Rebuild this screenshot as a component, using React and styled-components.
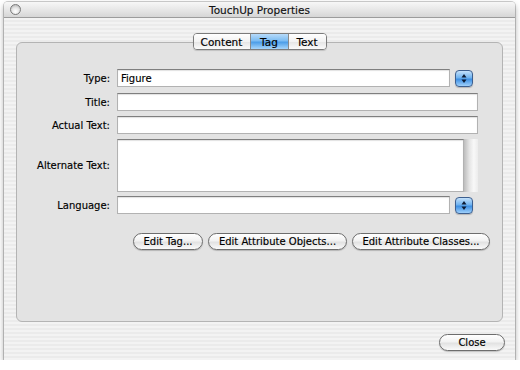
import React from "react";
import styled, { createGlobalStyle } from "styled-components";

const Global = createGlobalStyle`
  html, body { margin: 0; padding: 0; background: #ffffff; }
  body { font-family: "DejaVu Sans", "Liberation Sans", sans-serif; font-size: 10px; color: #000; }
`;

const Window = styled.div`
  margin: 2px 0 0 4px;
  width: 511px;
  height: 358px;
  display: flex;
  flex-direction: column;
  background: repeating-linear-gradient(#f3f3f3 0 2px, #ebebeb 2px 4px);
  box-shadow: 0 0 0 1px rgba(0,0,0,0.18), 0 3px 6px rgba(0,0,0,0.35);
  border-radius: 4px 4px 0 0;
`;

const TitleBar = styled.div`
  height: 15px;
  flex: none;
  display: flex;
  align-items: center;
  padding-left: 6px;
  background: linear-gradient(#f7f7f7, #e4e4e4 60%, #d6d6d6);
  border-bottom: 1px solid #9c9c9c;
  border-radius: 4px 4px 0 0;
`;

const CloseDot = styled.span`
  width: 9px;
  height: 9px;
  border-radius: 50%;
  border: 1px solid #7a7a7a;
  background: radial-gradient(circle at 50% 70%, #ffffff 0%, #e6e6e6 45%, #a9a9a9 100%);
  flex: none;
`;

const Title = styled.div`
  flex: 1;
  text-align: center;
  margin-right: 17px;
  font-size: 10.5px;
  color: #111;
  -webkit-text-stroke: 0.15px #111;
`;

const Content = styled.div`
  flex: 1;
  display: flex;
  flex-direction: column;
  padding: 15px 12px 0 12px;
`;

const Tabs = styled.div`
  align-self: center;
  display: flex;
  height: 15px;
  border: 1px solid #7b7b7b;
  border-radius: 4px;
  overflow: hidden;
  position: relative;
  z-index: 1;
  box-shadow: 0 1px 1px rgba(0,0,0,0.15);
`;

const Tab = styled.div`
  width: ${p => p.$w}px;
  display: flex;
  align-items: center;
  justify-content: center;
  font-size: 10.5px;
  color: #000;
  -webkit-text-stroke: 0.15px #000;
  border-left: ${p => (p.$first ? "none" : "1px solid #8a8a8a")};
  background: ${p =>
    p.$active
      ? "linear-gradient(#b7dbfa, #7cbcf2 45%, #4c9ee8 55%, #a7d6fb)"
      : "linear-gradient(#ffffff, #f3f3f3 50%, #e6e6e6 55%, #fbfbfb)"};
`;

const Box = styled.div`
  box-sizing: border-box;
  margin-top: -8px;
  height: 280px;
  border: 1px solid #b4b4b4;
  border-radius: 6px;
  background: #e3e3e3;
  padding-top: 26px;
  display: flex;
  flex-direction: column;
`;

const Row = styled.div`
  display: flex;
  align-items: center;
  margin-top: ${p => p.$mt || 0}px;
`;

const Label = styled.div`
  width: 93px;
  text-align: right;
  margin-right: 7px;
  font-size: 10px;
  color: #000;
  -webkit-text-stroke: 0.15px #000;
`;

const Field = styled.div`
  width: ${p => p.$w}px;
  height: ${p => p.$h || 18}px;
  box-sizing: border-box;
  background: #fff;
  border: 1px solid #b2b2b2;
  border-top-color: #7f7f7f;
  box-shadow: inset 0 1px 1px rgba(0,0,0,0.12);
  display: flex;
  align-items: center;
  padding-left: 3px;
  font-size: 10px;
  color: #000;
  -webkit-text-stroke: 0.15px #000;
`;

const AreaWrap = styled.div`
  display: flex;
  width: 361px;
  height: 53px;
`;

const Scroller = styled.div`
  width: 14px;
  background: linear-gradient(to right, #bdbdbd, #e6e6e6 40%, #f8f8f8 70%, #ececec);
`;

const Stepper = styled.div`
  width: 16px;
  height: 15px;
  margin-left: 5px;
  border: 1px solid #3d5f8f;
  border-radius: 4px;
  background: linear-gradient(#c4e1fb, #6fb2ef 45%, #3d8fe3 55%, #9fd0fb);
  display: flex;
  align-items: center;
  justify-content: center;
  box-shadow: 0 1px 1px rgba(0,0,0,0.2);
`;

const Buttons = styled.div`
  display: flex;
  justify-content: flex-end;
  padding-right: 12px;
  margin-top: 19px;
  gap: ${p => p.$gap || 5}px;
`;

const PillButton = styled.div`
  width: ${p => p.$w}px;
  height: 17px;
  box-sizing: border-box;
  border: 1px solid #6d6d6d;
  border-radius: 9px;
  background: linear-gradient(#ffffff, #f2f2f2 45%, #e2e2e2 55%, #fafafa);
  display: flex;
  align-items: center;
  justify-content: center;
  font-size: 10px;
  color: #000;
  -webkit-text-stroke: 0.15px #000;
  box-shadow: 0 1px 1px rgba(0,0,0,0.2);
`;

const Footer = styled.div`
  display: flex;
  justify-content: flex-end;
  margin: 12px -2px 0 0;
`;

const StepIcon = () => (
  <svg width="8" height="11" viewBox="0 0 8 11">
    <path d="M4 1 L6.5 4.5 H1.5 Z" fill="#0c1a33" />
    <path d="M4 10 L6.5 6.5 H1.5 Z" fill="#0c1a33" />
  </svg>
);

export default function App() {
  return (
    <>
      <Global />
      <Window>
        <TitleBar>
          <CloseDot />
          <Title>TouchUp Properties</Title>
        </TitleBar>
        <Content>
          <Tabs>
            <Tab $w={56} $first>Content</Tab>
            <Tab $w={37} $active>Tag</Tab>
            <Tab $w={37}>Text</Tab>
          </Tabs>
          <Box>
            <Row>
              <Label>Type:</Label>
              <Field $w={333}>Figure</Field>
              <Stepper><StepIcon /></Stepper>
            </Row>
            <Row $mt={6}>
              <Label>Title:</Label>
              <Field $w={361} />
            </Row>
            <Row $mt={5}>
              <Label>Actual Text:</Label>
              <Field $w={361} />
            </Row>
            <Row $mt={5}>
              <Label>Alternate Text:</Label>
              <AreaWrap>
                <Field $w={347} $h={53} />
                <Scroller />
              </AreaWrap>
            </Row>
            <Row $mt={4}>
              <Label>Language:</Label>
              <Field $w={333} />
              <Stepper><StepIcon /></Stepper>
            </Row>
            <Buttons $gap={5}>
              <PillButton $w={70}>Edit Tag...</PillButton>
              <PillButton $w={139}>Edit Attribute Objects...</PillButton>
              <PillButton $w={138}>Edit Attribute Classes...</PillButton>
            </Buttons>
          </Box>
          <Footer>
            <PillButton $w={66}>Close</PillButton>
          </Footer>
        </Content>
      </Window>
    </>
  );
}
